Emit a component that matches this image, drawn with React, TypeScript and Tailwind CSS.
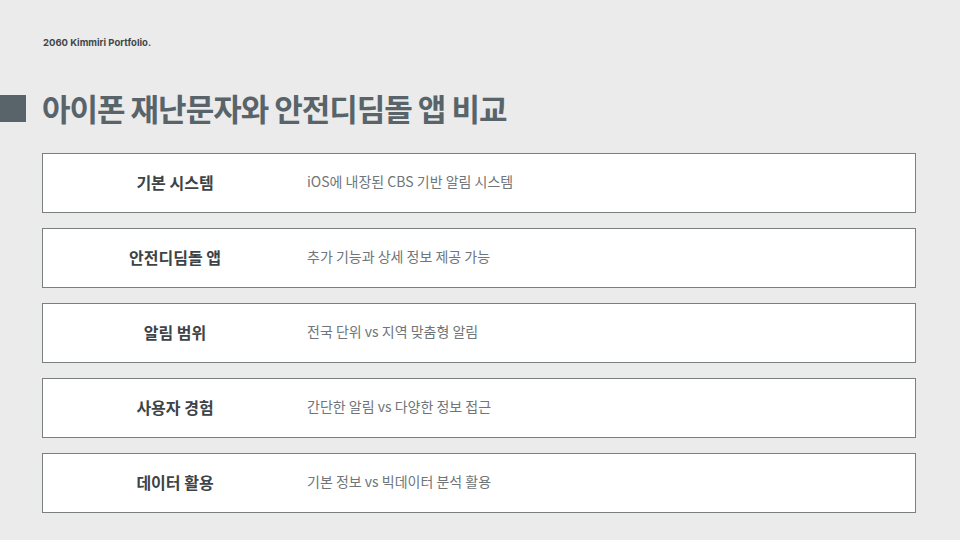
const ROWS = [
  { label: "기본 시스템", value: "iOS에 내장된 CBS 기반 알림 시스템" },
  { label: "안전디딤돌 앱", value: "추가 기능과 상세 정보 제공 가능" },
  { label: "알림 범위", value: "전국 단위 vs 지역 맞춤형 알림" },
  { label: "사용자 경험", value: "간단한 알림 vs 다양한 정보 접근" },
  { label: "데이터 활용", value: "기본 정보 vs 빅데이터 분석 활용" },
];

export default function App() {
  return (
    <div
      className="h-[540px] w-[960px] overflow-hidden bg-[#ebebeb]"
      style={{ fontFamily: '"Noto Sans CJK KR", "Noto Sans", sans-serif' }}
    >
      <p className="pl-[43px] pt-[37px] font-['Inter',sans-serif] text-[9.5px] font-bold leading-[12px] text-[#3f474b]">
        2060 Kimmiri Portfolio.
      </p>

      <div className="mt-[39px] flex items-center gap-[16px]">
        <div className="h-[27px] w-[26px] bg-[#58646a]" />
        <h1 className="text-[31px] font-bold leading-[40px] tracking-[-1px] text-[#58646a]">
          아이폰 재난문자와 안전디딤돌 앱 비교
        </h1>
      </div>

      <div className="ml-[42px] mt-[25px] flex w-[874px] flex-col gap-[15px]">
        {ROWS.map((r) => (
          <div
            key={r.label}
            className="flex h-[60px] items-center border border-[#7a7f82] bg-white pb-[3px]"
          >
            <div className="w-[264px] text-center text-[16px] font-bold text-[#3d4346]">
              {r.label}
            </div>
            <div className="text-[14px] text-[#6f7578]">{r.value}</div>
          </div>
        ))}
      </div>
    </div>
  );
}
